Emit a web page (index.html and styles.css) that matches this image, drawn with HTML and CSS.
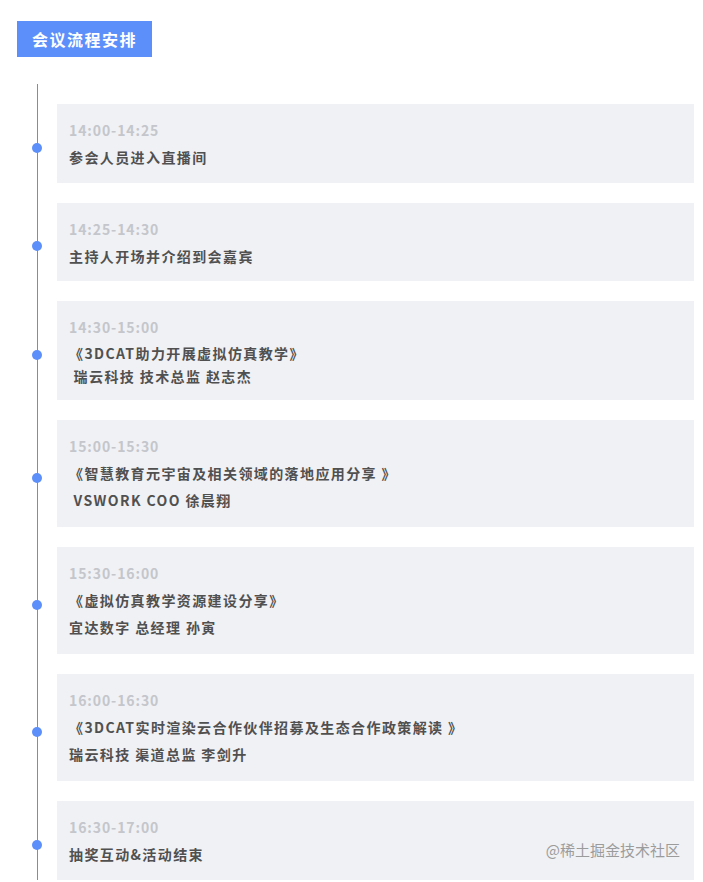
FILE: index.html
```html
<!DOCTYPE html>
<html lang="zh-CN">
<head>
    <meta charset="UTF-8">
    <meta name="viewport" content="width=device-width, initial-scale=1.0">
    <title>会议流程安排</title>
    <link rel="stylesheet" href="styles.css">
</head>
<body>
    <div class="page">
        <h1 class="section-title">会议流程安排</h1>

        <div class="timeline">
            <div class="item">
                <span class="dot"></span>
                <div class="time">14:00-14:25</div>
                <div class="line">参会人员进入直播间</div>
            </div>

            <div class="item short">
                <span class="dot"></span>
                <div class="time">14:25-14:30</div>
                <div class="line">主持人开场并介绍到会嘉宾</div>
            </div>

            <div class="item">
                <span class="dot"></span>
                <div class="time">14:30-15:00</div>
                <div class="line tight">《3DCAT助力开展虚拟仿真教学》<br>&nbsp;瑞云科技 技术总监 赵志杰</div>
            </div>

            <div class="item tall">
                <span class="dot"></span>
                <div class="time">15:00-15:30</div>
                <div class="line">《智慧教育元宇宙及相关领域的落地应用分享 》</div>
                <div class="line">&nbsp;VSWORK COO 徐晨翔</div>
            </div>

            <div class="item tall">
                <span class="dot"></span>
                <div class="time">15:30-16:00</div>
                <div class="line">《虚拟仿真教学资源建设分享》</div>
                <div class="line">宜达数字 总经理 孙寅</div>
            </div>

            <div class="item tall">
                <span class="dot"></span>
                <div class="time">16:00-16:30</div>
                <div class="line">《3DCAT实时渲染云合作伙伴招募及生态合作政策解读 》</div>
                <div class="line">瑞云科技 渠道总监 李剑升</div>
            </div>

            <div class="item">
                <span class="dot"></span>
                <div class="time">16:30-17:00</div>
                <div class="line">抽奖互动&amp;活动结束</div>
                <span class="watermark">@稀土掘金技术社区</span>
            </div>
        </div>
    </div>
</body>
</html>
```

FILE: styles.css
```css
body {
    margin: 0;
    background: #fff;
    font-family: "Noto Sans CJK SC", "Noto Sans", sans-serif;
    color: #4d4d4d;
}

.page {
    padding: 21px 9px 0 17px;
}

.section-title {
    display: inline-block;
    margin: 0;
    padding: 0 15px;
    height: 36px;
    line-height: 36px;
    background-color: #5c8ffa;
    color: #fff;
    font-size: 16px;
    font-weight: bold;
    letter-spacing: 1.5px;
}

.timeline {
    margin-top: 27px;
    margin-left: 20px;
    padding: 20px 0 0 19px;
    border-left: 1px solid #5c8ffa;
}

.item {
    position: relative;
    background-color: #f0f1f5;
    padding: 13px 12px 12px;
    margin-bottom: 20px;
}

.item.short {
    padding-bottom: 11px;
}

.item.tall {
    padding-bottom: 13px;
}

.dot {
    position: absolute;
    left: -25px;
    top: calc(50% - 1px);
    width: 10px;
    height: 10px;
    border-radius: 50%;
    background-color: #5c8ffa;
}

.time {
    font-size: 14px;
    font-weight: bold;
    line-height: 27px;
    color: #c4c6cb;
    letter-spacing: 0.9px;
}

.line {
    font-size: 14px;
    font-weight: bold;
    line-height: 27px;
    letter-spacing: 1.4px;
    color: #505050;
}

.line.tight {
    line-height: 23px;
    margin-top: 1px;
}

.watermark {
    position: absolute;
    right: 14px;
    top: 38px;
    font-size: 15px;
    color: #9b9b9b;
}
```
